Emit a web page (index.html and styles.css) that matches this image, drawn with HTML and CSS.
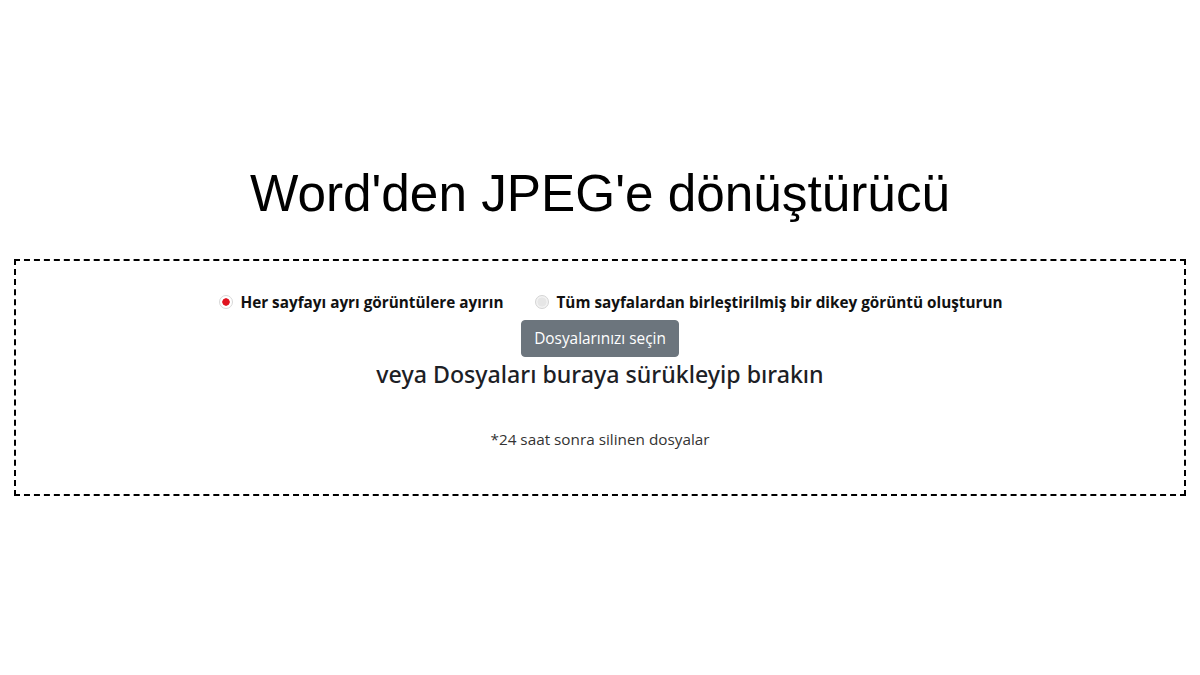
FILE: index.html
```html
<!DOCTYPE html>
<html lang="tr">
<head>
<meta charset="utf-8">
<title>Word'den JPEG'e dönüştürücü</title>
<link rel="stylesheet" href="styles.css">
</head>
<body>
<main class="page">
  <h1 class="title">Word'den JPEG'e dönüştürücü</h1>
  <section class="dropzone">
    <div class="options">
      <label class="option"><span class="radio radio-on"></span><span class="option-text">Her sayfayı ayrı görüntülere ayırın</span></label>
      <label class="option"><span class="radio radio-off"></span><span class="option-text">Tüm sayfalardan birleştirilmiş bir dikey görüntü oluşturun</span></label>
    </div>
    <button class="btn">Dosyalarınızı seçin</button>
    <div class="drop-text">veya Dosyaları buraya sürükleyip bırakın</div>
    <div class="note">*24 saat sonra silinen dosyalar</div>
  </section>
</main>
</body>
</html>
```
FILE: styles.css
```css
html, body {
  margin: 0;
  padding: 0;
  background: #fff;
}
.page {
  padding: 0 14px;
  font-family: "Open Sans", "Noto Sans", sans-serif;
  color: #212529;
}
.title {
  font-family: "Liberation Sans", Arial, sans-serif;
  font-weight: 400;
  font-size: 51.3px;
  line-height: 58px;
  color: #000;
  text-align: center;
  margin: 0;
  padding-top: 165px;
  padding-bottom: 36px;
}
.dropzone {
  border: 2px dashed #000;
  height: 237px;
  box-sizing: border-box;
  display: flex;
  flex-direction: column;
  align-items: center;
  padding-top: 30px;
}
.options {
  display: flex;
  gap: 32px;
  align-items: center;
  padding-left: 22px;
}
.option {
  display: flex;
  align-items: center;
  gap: 7px;
  font-weight: 700;
  font-size: 15.3px;
  line-height: 22px;
  color: #111;
}
.radio {
  width: 14px;
  height: 14px;
  border-radius: 50%;
  box-sizing: border-box;
  display: inline-block;
}
.radio-on {
  border: 1px solid #d8d8d8;
  background: radial-gradient(circle, #e0131f 0 3.4px, #fff 4px);
}
.radio-off {
  border: 1px solid #d4d4d4;
  background: radial-gradient(circle, #e6e6e6 0 4.2px, #f2f2f2 4.8px);
}
.btn {
  margin-top: 7px;
  background: #6c757d;
  color: #fff;
  border: 1px solid #6c757d;
  border-radius: 4px;
  font-family: "Open Sans", "Noto Sans", sans-serif;
  font-size: 15.4px;
  line-height: 25px;
  padding: 5px 12px;
}
.drop-text {
  font-family: "Noto Sans", "Open Sans", sans-serif;
  font-size: 23.2px;
  font-weight: 500;
  line-height: 34px;
  margin-top: 0;
  color: #1c2025;
}
.note {
  margin-top: 37px;
  font-size: 15.3px;
  line-height: 22px;
  color: #333;
}
```
